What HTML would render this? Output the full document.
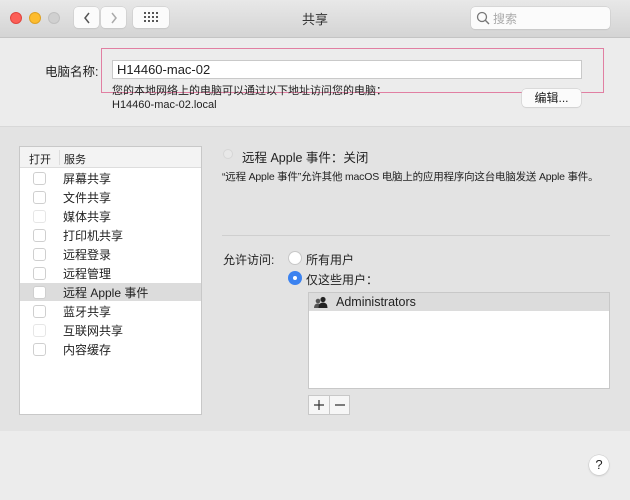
<!DOCTYPE html>
<html><head><meta charset="utf-8"><style>
*{margin:0;padding:0;box-sizing:border-box}
body{width:630px;height:500px;overflow:hidden;background:#ececec;font-family:"Liberation Sans","Noto Sans CJK SC",sans-serif;font-size:12px;color:#222;position:relative}
.a{position:absolute}
.tb{left:0;top:0;width:630px;height:38px;background:linear-gradient(#e8e8e8,#d4d4d4);border-bottom:1px solid #c4c4c4}
.tl{width:12px;height:12px;border-radius:50%;top:12px}
.btn{background:#fbfbfb;border-radius:4px;box-shadow:0 0 0 0.5px #c8c8c8,0 1px 1px rgba(0,0,0,.08)}
.chk{width:13px;height:13px;border:1px solid #cfcfcf;border-radius:3px;background:#fff;left:33px}
.row{left:63px;font-size:12px}
</style></head><body>
<div class="a tb"></div>
<div class="a tl" style="left:10px;background:#fc5f57;border:1px solid #e0443e"></div>
<div class="a tl" style="left:29px;background:#fdbc2e;border:1px solid #dea123"></div>
<div class="a tl" style="left:48px;background:#d0d0d0;border:1px solid #c0c0c0"></div>
<div class="a btn" style="left:74px;top:7px;width:25px;height:21px"></div>
<svg class="a" style="left:82px;top:11px" width="10" height="14"><path d="M7 2 L3 7 L7 12" fill="none" stroke="#555" stroke-width="1.5"/></svg>
<div class="a btn" style="left:101px;top:7px;width:25px;height:21px"></div>
<svg class="a" style="left:109px;top:11px" width="10" height="14"><path d="M3 2 L7 7 L3 12" fill="none" stroke="#aaa" stroke-width="1.5"/></svg>
<div class="a btn" style="left:133px;top:7px;width:36px;height:21px"></div>
<svg class="a" style="left:144px;top:12px" width="14" height="11" fill="#555">
<rect x="0" y="0" width="2" height="2"/><rect x="4" y="0" width="2" height="2"/><rect x="8" y="0" width="2" height="2"/><rect x="12" y="0" width="2" height="2"/>
<rect x="0" y="4" width="2" height="2"/><rect x="4" y="4" width="2" height="2"/><rect x="8" y="4" width="2" height="2"/><rect x="12" y="4" width="2" height="2"/>
<rect x="0" y="8" width="2" height="2"/><rect x="4" y="8" width="2" height="2"/><rect x="8" y="8" width="2" height="2"/><rect x="12" y="8" width="2" height="2"/></svg>
<div class="a" style="left:302px;top:9px;font-size:13px;color:#333">共享</div>
<div class="a btn" style="left:471px;top:7px;width:139px;height:22px"></div>
<svg class="a" style="left:476px;top:11px" width="14" height="14"><circle cx="6" cy="6" r="4.5" fill="none" stroke="#777" stroke-width="1.3"/><line x1="9.3" y1="9.3" x2="13" y2="13" stroke="#777" stroke-width="1.4"/></svg>
<div class="a" style="left:493px;top:10px;font-size:12px;color:#aaa">搜索</div>

<div class="a" style="left:45px;top:61px;font-size:12.5px">电脑名称:</div>
<div class="a" style="left:112px;top:60px;width:470px;height:19px;background:#fff;border:1px solid #c9c9c9;font-size:13px;padding:1px 4px">H14460-mac-02</div>
<div class="a" style="left:101px;top:48px;width:503px;height:45px;border:1.5px solid #e17fa2"></div>
<div class="a" style="left:112px;top:84px;font-size:11px;line-height:14px">您的本地网络上的电脑可以通过以下地址访问您的电脑：<br>H14460-mac-02.local</div>
<div class="a btn" style="left:522px;top:89px;width:59px;height:18px;text-align:center;font-size:12px;line-height:18px">编辑...</div>

<div class="a" style="left:0;top:126px;width:630px;height:305px;background:#e3e3e3;border-top:1px solid #d8d8d8"></div>
<div class="a" style="left:19px;top:146px;width:183px;height:269px;background:#fff;border:1px solid #c8c8c8"></div>
<div class="a" style="left:20px;top:147px;width:181px;height:21px;background:#f3f3f3;border-bottom:1px solid #ddd"></div>
<div class="a" style="left:59px;top:150px;width:1px;height:15px;background:#ddd"></div>
<div class="a" style="left:29px;top:151px;font-size:11px">打开</div>
<div class="a" style="left:64px;top:151px;font-size:11px">服务</div>
<div class="a" style="left:20px;top:283px;width:181px;height:18px;background:#dcdcdc"></div>
<div class="a chk" style="top:172px"></div><div class="a row" style="top:170px">屏幕共享</div>
<div class="a chk" style="top:191px"></div><div class="a row" style="top:189px">文件共享</div>
<div class="a chk" style="top:210px;border-color:#e6e6e6"></div><div class="a row" style="top:208px">媒体共享</div>
<div class="a chk" style="top:229px"></div><div class="a row" style="top:227px">打印机共享</div>
<div class="a chk" style="top:248px"></div><div class="a row" style="top:246px">远程登录</div>
<div class="a chk" style="top:267px"></div><div class="a row" style="top:265px">远程管理</div>
<div class="a chk" style="top:286px"></div><div class="a row" style="top:284px">远程 Apple 事件</div>
<div class="a chk" style="top:305px"></div><div class="a row" style="top:303px">蓝牙共享</div>
<div class="a chk" style="top:324px;border-color:#e6e6e6"></div><div class="a row" style="top:322px">互联网共享</div>
<div class="a chk" style="top:343px"></div><div class="a row" style="top:341px">内容缓存</div>

<div class="a" style="left:223px;top:149px;width:10px;height:10px;border-radius:50%;border:1px solid #d6d6d6;background:#e8e8e8"></div>
<div class="a" style="left:242px;top:147px;font-size:12.5px">远程 Apple 事件：关闭</div>
<div class="a" style="left:222px;top:169px;font-size:10.5px;letter-spacing:-0.2px;white-space:nowrap">“远程 Apple 事件”允许其他 macOS 电脑上的应用程序向这台电脑发送 Apple 事件。</div>
<div class="a" style="left:222px;top:235px;width:388px;height:1px;background:#cfcfcf"></div>
<div class="a" style="left:223px;top:251px;font-size:12px">允许访问:</div>
<div class="a" style="left:288px;top:251px;width:14px;height:14px;border-radius:50%;background:#fff;border:1px solid #c8c8c8"></div>
<div class="a" style="left:306px;top:251px;font-size:12px">所有用户</div>
<div class="a" style="left:288px;top:271px;width:14px;height:14px;border-radius:50%;background:#3b82f0"></div>
<div class="a" style="left:293px;top:276px;width:4px;height:4px;border-radius:50%;background:#fff"></div>
<div class="a" style="left:306px;top:271px;font-size:12px">仅这些用户：</div>
<div class="a" style="left:308px;top:292px;width:302px;height:97px;background:#fff;border:1px solid #c8c8c8"></div>
<div class="a" style="left:309px;top:293px;width:300px;height:18px;background:#dcdcdc"></div>
<svg class="a" style="left:313px;top:296px" width="16" height="12"><circle cx="5" cy="5" r="2.3" fill="#555"/><path d="M1 12 Q1 7.5 5 7.5 Q8 7.5 8.5 12Z" fill="#555"/><circle cx="10" cy="3.5" r="2.6" fill="#222"/><path d="M5.5 12 Q5.5 6.5 10 6.5 Q14.5 6.5 14.5 12Z" fill="#222"/></svg>
<div class="a" style="left:336px;top:295px;font-size:12.5px">Administrators</div>
<div class="a" style="left:308px;top:395px;width:42px;height:20px;background:#f6f6f6;border:1px solid #c8c8c8"></div>
<div class="a" style="left:329px;top:396px;width:1px;height:18px;background:#c8c8c8"></div>
<svg class="a" style="left:309px;top:396px" width="40" height="18"><path d="M10 4 V14 M5 9 H15 M26 9 H36" stroke="#333" stroke-width="1.2"/></svg>

<div class="a" style="left:589px;top:455px;width:20px;height:20px;border-radius:50%;background:#fff;box-shadow:0 0 0 .5px #c8c8c8,0 1px 2px rgba(0,0,0,.15);text-align:center;font-size:13px;line-height:20px">?</div>
</body></html>
